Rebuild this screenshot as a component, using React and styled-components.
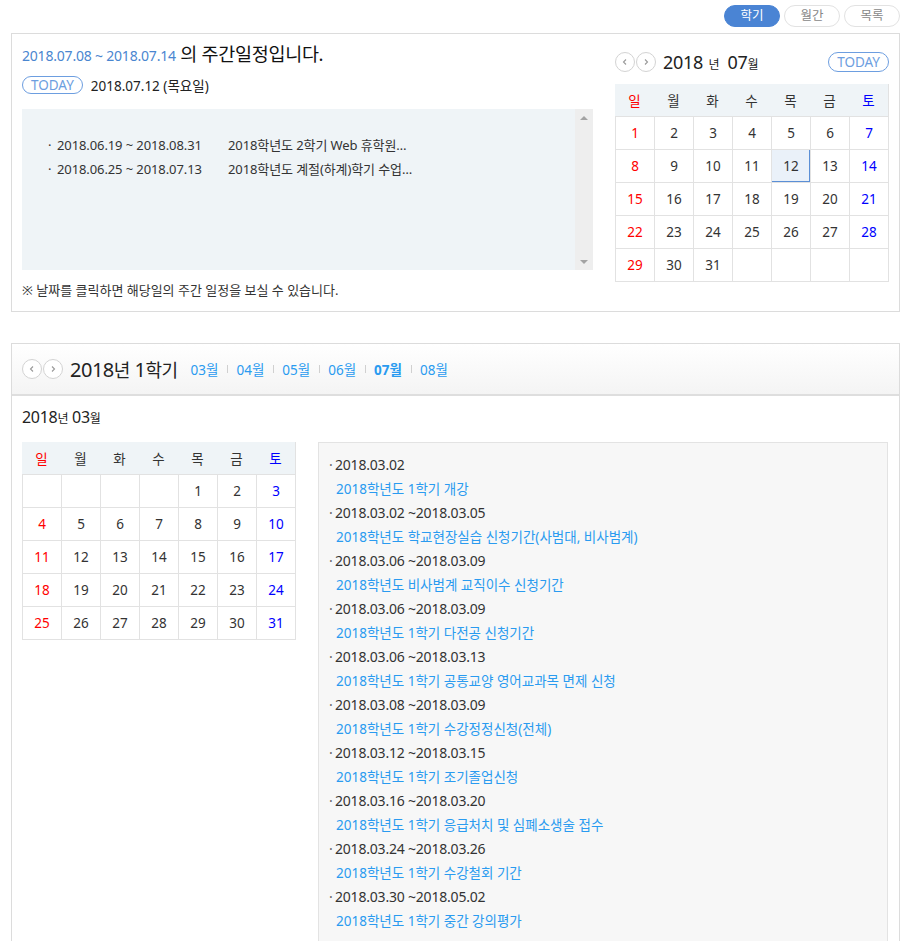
import React from "react";
import styled, { createGlobalStyle, css } from "styled-components";

const Global = createGlobalStyle`
  html, body { margin: 0; padding: 0; background: #fff; }
  body { font-family: "Noto Sans", "Noto Sans CJK KR", sans-serif; color: #333; }
  * { box-sizing: border-box; }
`;

const Page = styled.div`
  padding: 5px 9px 0 11px;
`;

const TabBar = styled.div`
  display: flex;
  justify-content: flex-end;
  gap: 4px;
  margin-bottom: 6px;
`;

const TabButton = styled.button`
  width: 56px;
  height: 22px;
  border-radius: 11px;
  border: 1px solid ${(p) => (p.$active ? "#4a84d4" : "#e2e2e2")};
  background: ${(p) => (p.$active ? "#4a84d4" : "#fff")};
  color: ${(p) => (p.$active ? "#fff" : "#888")};
  font-family: "Noto Sans", "Noto Sans CJK KR", sans-serif;
  font-size: 12.5px;
  padding: 0;
  line-height: 20px;
  cursor: pointer;
`;

const Panel = styled.section`
  border: 1px solid #dcdcdc;
  background: #fff;
`;

const WeekPanel = styled(Panel)`
  display: flex;
  gap: 22px;
  padding: 7px 10px 10px 10px;
  height: 279px;
`;

const WeekLeft = styled.div`
  width: 571px;
  display: flex;
  flex-direction: column;
`;

const WeekTitle = styled.h2`
  margin: 0;
  font-weight: normal;
  font-size: 18.5px;
  line-height: 26px;
  color: #111;
  letter-spacing: -0.3px;
`;

const RangeText = styled.span`
  font-size: 14px;
  color: #4a86d0;
  letter-spacing: -0.2px;
`;

const TodayRow = styled.div`
  display: flex;
  align-items: center;
  gap: 8px;
  margin-top: 6px;
  font-size: 13.5px;
  color: #222;
`;

const TodayPill = styled.span`
  display: inline-flex;
  align-items: center;
  justify-content: center;
  height: ${(p) => (p.$wide ? "20px" : "18px")};
  padding: 0 8px;
  border: 1px solid #6d9ee0;
  border-radius: 10px;
  color: #6d9ee0;
  font-size: 13.5px;
  line-height: 16px;
  font-family: "Noto Sans", sans-serif;
  background: #fff;
`;

const WeekBox = styled.div`
  margin-top: 14px;
  height: 161px;
  background: #eff4f7;
  display: flex;
`;

const WeekList = styled.ul`
  list-style: none;
  margin: 0;
  padding: 24px 0 0 26px;
  flex: 1;
`;

const WeekItem = styled.li`
  display: flex;
  font-size: 13px;
  line-height: 24px;
  color: #333;
  letter-spacing: -0.1px;
`;

const WeekDate = styled.span`
  width: 180px;
  &::before {
    content: "·";
    display: inline-block;
    width: 9px;
  }
`;

const ScrollTrack = styled.div`
  width: 18px;
  background: #eeeeee;
  display: flex;
  flex-direction: column;
  justify-content: space-between;
  align-items: center;
  padding: 7px 0 6px;
`;

const Arrow = styled.span`
  width: 0;
  height: 0;
  border-left: 4px solid transparent;
  border-right: 4px solid transparent;
  ${(p) =>
    p.$down
      ? css`border-top: 4px solid #a3a3a3;`
      : css`border-bottom: 4px solid #a3a3a3;`}
`;

const Note = styled.p`
  margin: 10px 0 0 0;
  font-size: 13px;
  color: #333;
`;

const WeekRight = styled.div`
  width: 274px;
  display: flex;
  flex-direction: column;
`;

const CalHead = styled.div`
  display: flex;
  align-items: center;
  height: 24px;
  margin-top: 9px;
  margin-bottom: 10px;
`;

const NavPair = styled.div`
  display: flex;
  gap: 1px;
  margin-right: 7px;
`;

const NavCircle = styled.button`
  width: 20px;
  height: 20px;
  border-radius: 50%;
  border: 1px solid #d3d3d3;
  background: #fff;
  padding: 0;
  display: flex;
  align-items: center;
  justify-content: center;
  cursor: pointer;
`;

const YearMonth = styled.span`
  font-size: 18px;
  color: #222;
  letter-spacing: -0.3px;
  white-space: nowrap;
`;

const Unit = styled.span`
  font-size: ${(p) => p.$size || 12}px;
  margin: ${(p) => p.$margin || "0"};
`;

const Spacer = styled.div`
  flex: 1;
`;

const CalGrid = styled.div`
  display: grid;
  grid-template-columns: repeat(7, 1fr);
  width: 274px;
  border-right: 1px solid #e2e2e2;
  border-bottom: 1px solid #e2e2e2;
`;

const DayName = styled.div`
  height: 32px;
  background: #eff4f7;
  display: flex;
  align-items: center;
  justify-content: center;
  font-size: 13.5px;
  color: ${(p) => p.$color || "#333"};
`;

const Cell = styled.div`
  height: 33px;
  border-left: 1px solid #e2e2e2;
  border-top: 1px solid #e2e2e2;
  display: flex;
  align-items: center;
  justify-content: center;
  font-size: 13.5px;
  color: ${(p) => p.$color || "#333"};
  background: ${(p) => (p.$today ? "#eaf1f9" : "#fff")};
  ${(p) => p.$today && css`box-shadow: inset -1px -1px 0 #5b8fd6;`}
  cursor: pointer;
`;

const TermPanel = styled(Panel)`
  margin-top: 31px;
  border-bottom: none;
  min-height: 640px;
`;

const TermHeader = styled.div`
  height: 52px;
  background: linear-gradient(#ffffff, #f4f4f4);
  border-bottom: 2px solid #dedede;
  display: flex;
  align-items: center;
  padding: 0 10px 0 10px;
`;

const TermTitle = styled.span`
  font-size: 20px;
  color: #222;
  letter-spacing: -0.5px;
  margin-right: 13px;
`;

const MonthNav = styled.nav`
  display: flex;
  align-items: center;
`;

const MonthLink = styled.a`
  font-size: 13.5px;
  color: #2a9bf0;
  text-decoration: none;
  font-weight: ${(p) => (p.$active ? "bold" : "normal")};
  cursor: pointer;
`;

const Sep = styled.span`
  width: 1px;
  height: 8px;
  background: #d0d0d0;
  margin: 0 8px 0 9px;
`;

const TermBody = styled.div`
  padding: 10px 11px 0 10px;
`;

const MonthTitle = styled.div`
  font-size: 16px;
  color: #222;
  line-height: 22px;
  letter-spacing: -0.3px;
`;

const TermContent = styled.div`
  display: flex;
  gap: 22px;
  margin-top: 12px;
  align-items: flex-start;
`;

const EventBox = styled.div`
  flex: 1;
  background: #f7f7f7;
  border: 1px solid #e3e3e3;
  padding: 10px 10px 20px 10px;
  min-height: 520px;
`;

const EventDate = styled.div`
  font-size: 14px;
  line-height: 24px;
  color: #333;
  letter-spacing: -0.2px;
  &::before {
    content: "·";
    display: inline-block;
    width: 6px;
    color: #666;
  }
`;

const EventTitle = styled.a`
  display: block;
  font-size: 13.5px;
  line-height: 24px;
  color: #2a9bf0;
  padding-left: 7px;
  text-decoration: none;
  cursor: pointer;
`;

const Chevron = ({ dir }) => (
  <svg width="8" height="8" viewBox="0 0 8 8">
    <path
      d={dir === "left" ? "M5 1.5 L2.5 4 L5 6.5" : "M3 1.5 L5.5 4 L3 6.5"}
      fill="none"
      stroke="#999"
      strokeWidth="1.1"
    />
  </svg>
);

const Nav = () => (
  <NavPair>
    <NavCircle aria-label="이전">
      <Chevron dir="left" />
    </NavCircle>
    <NavCircle aria-label="다음">
      <Chevron dir="right" />
    </NavCircle>
  </NavPair>
);

const dayNames = ["일", "월", "화", "수", "목", "금", "토"];
const colColor = (i) => (i === 0 ? "#f00" : i === 6 ? "#00f" : undefined);

const Calendar = ({ offset, days, today }) => {
  const cells = [];
  for (let i = 0; i < offset; i++) cells.push(null);
  for (let d = 1; d <= days; d++) cells.push(d);
  while (cells.length % 7) cells.push(null);
  return (
    <CalGrid>
      {dayNames.map((n, i) => (
        <DayName key={n} $color={colColor(i)}>
          {n}
        </DayName>
      ))}
      {cells.map((d, i) => (
        <Cell key={i} $color={colColor(i % 7)} $today={d === today}>
          {d}
        </Cell>
      ))}
    </CalGrid>
  );
};

const weekItems = [
  ["2018.06.19 ~ 2018.08.31", "2018학년도 2학기 Web 휴학원…"],
  ["2018.06.25 ~ 2018.07.13", "2018학년도 계절(하계)학기 수업…"],
];

const events = [
  ["2018.03.02", "2018학년도 1학기 개강"],
  ["2018.03.02 ~2018.03.05", "2018학년도 학교현장실습 신청기간(사범대, 비사범계)"],
  ["2018.03.06 ~2018.03.09", "2018학년도 비사범계 교직이수 신청기간"],
  ["2018.03.06 ~2018.03.09", "2018학년도 1학기 다전공 신청기간"],
  ["2018.03.06 ~2018.03.13", "2018학년도 1학기 공통교양 영어교과목 면제 신청"],
  ["2018.03.08 ~2018.03.09", "2018학년도 1학기 수강정정신청(전체)"],
  ["2018.03.12 ~2018.03.15", "2018학년도 1학기 조기졸업신청"],
  ["2018.03.16 ~2018.03.20", "2018학년도 1학기 응급처치 및 심폐소생술 접수"],
  ["2018.03.24 ~2018.03.26", "2018학년도 1학기 수강철회 기간"],
  ["2018.03.30 ~2018.05.02", "2018학년도 1학기 중간 강의평가"],
];

const months = ["03월", "04월", "05월", "06월", "07월", "08월"];

export default function App() {
  return (
    <Page>
      <Global />
      <TabBar>
        <TabButton $active>학기</TabButton>
        <TabButton>월간</TabButton>
        <TabButton>목록</TabButton>
      </TabBar>

      <WeekPanel>
        <WeekLeft>
          <WeekTitle>
            <RangeText>2018.07.08 ~ 2018.07.14</RangeText> 의 주간일정입니다.
          </WeekTitle>
          <TodayRow>
            <TodayPill>TODAY</TodayPill>
            <span>2018.07.12 (목요일)</span>
          </TodayRow>
          <WeekBox>
            <WeekList>
              {weekItems.map(([d, t]) => (
                <WeekItem key={d}>
                  <WeekDate>{d}</WeekDate>
                  <span>{t}</span>
                </WeekItem>
              ))}
            </WeekList>
            <ScrollTrack>
              <Arrow />
              <Arrow $down />
            </ScrollTrack>
          </WeekBox>
          <Note>※ 날짜를 클릭하면 해당일의 주간 일정을 보실 수 있습니다.</Note>
        </WeekLeft>

        <WeekRight>
          <CalHead>
            <Nav />
            <YearMonth>
              2018 <Unit $margin="0 4px 0 1px">년</Unit> 07<Unit>월</Unit>
            </YearMonth>
            <Spacer />
            <TodayPill $wide>TODAY</TodayPill>
          </CalHead>
          <Calendar offset={0} days={31} today={12} />
        </WeekRight>
      </WeekPanel>

      <TermPanel>
        <TermHeader>
          <Nav />
          <TermTitle>
            2018<Unit $size={18}>년</Unit> 1<Unit $size={18}>학기</Unit>
          </TermTitle>
          <MonthNav>
            {months.map((m, i) => (
              <React.Fragment key={m}>
                {i > 0 && <Sep />}
                <MonthLink $active={m === "07월"}>{m}</MonthLink>
              </React.Fragment>
            ))}
          </MonthNav>
        </TermHeader>
        <TermBody>
          <MonthTitle>
            2018<Unit $size={12}>년</Unit> 03<Unit $size={12}>월</Unit>
          </MonthTitle>
          <TermContent>
            <Calendar offset={4} days={31} />
            <EventBox>
              {events.map(([d, t], i) => (
                <div key={i}>
                  <EventDate>{d}</EventDate>
                  <EventTitle>{t}</EventTitle>
                </div>
              ))}
            </EventBox>
          </TermContent>
        </TermBody>
      </TermPanel>
    </Page>
  );
}
